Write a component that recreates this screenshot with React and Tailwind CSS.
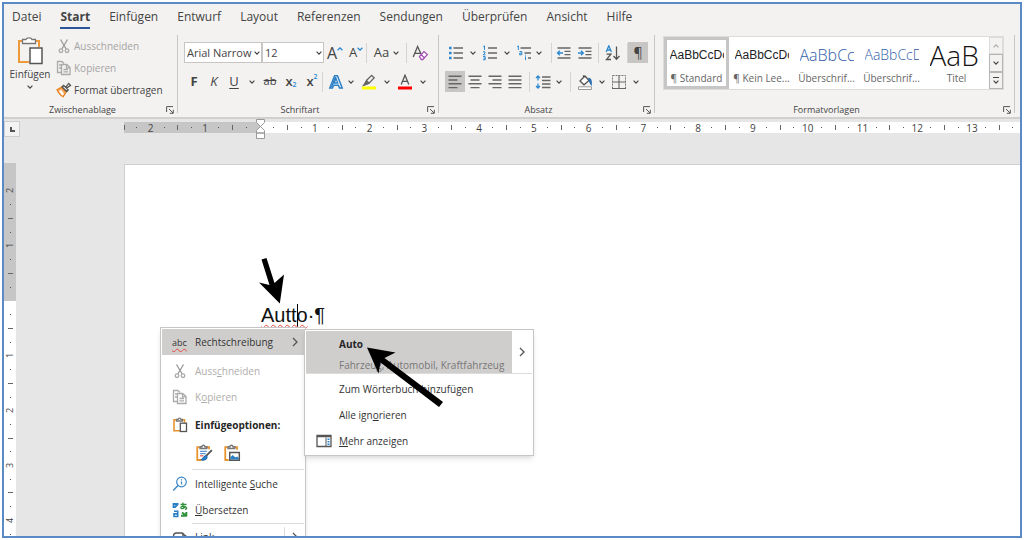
import clsx from "clsx";

const tabs = [
	"Datei",
	"Start",
	"Einfügen",
	"Entwurf",
	"Layout",
	"Referenzen",
	"Sendungen",
	"Überprüfen",
	"Ansicht",
	"Hilfe",
];

const styleItems = [
	{ sample: "AaBbCcDc", name: "¶ Standard", look: "text-[12px] text-[#222] font-['Liberation_Sans_Narrow','Liberation_Sans',sans-serif]", active: true },
	{ sample: "AaBbCcDc", name: "¶ Kein Lee...", look: "text-[12px] text-[#222] font-['Liberation_Sans_Narrow','Liberation_Sans',sans-serif]" },
	{ sample: "AaBbCcD", name: "Überschrif...", look: "text-[16px] font-light text-[#2f5da8]" },
	{ sample: "AaBbCcD", name: "Überschrif...", look: "text-[14px] font-light text-[#2f5da8]" },
	{ sample: "AaB", name: "Titel", look: "text-[28px] font-light text-[#111]" },
];

const Chevron = ({ className }) => (
	<svg viewBox="0 0 6 4" className={clsx("w-[6px] h-[4px] shrink-0", className)} fill="none" stroke="#444" strokeWidth="1.2">
		<path d="M0.6 0.7 3 3.1 5.4 0.7" />
	</svg>
);

const ChevronRight = ({ className }) => (
	<svg viewBox="0 0 6 10" className={clsx("w-[6px] h-[10px] shrink-0", className)} fill="none" stroke="#555" strokeWidth="1.3">
		<path d="M1 1 5 5 1 9" />
	</svg>
);

const Icon = ({ children, className = "w-4 h-4", box = "0 0 16 16" }) => (
	<svg viewBox={box} className={clsx("shrink-0", className)} fill="none" stroke="#555" strokeWidth="1.3" aria-hidden="true">
		{children}
	</svg>
);

const ScissorsIcon = () => (
	<Icon>
		<path d="M4.5 1.5 10.2 11M11.5 1.5 5.8 11" stroke="#999" />
		<circle cx="5" cy="12.7" r="1.8" stroke="#aaa" />
		<circle cx="11" cy="12.7" r="1.8" stroke="#aaa" />
	</Icon>
);

const CopyIcon = () => (
	<Icon>
		<path d="M5 12.5H1.5v-11H6l2 2" stroke="#aaa" />
		<path d="M5.5 4.5h5.2L14 7.6v6.9H5.5zM10.5 4.5v3.3H14M7.5 9.5h4.5M7.5 11.8h4.5M3 5h2M3 8h2" stroke="#aaa" />
	</Icon>
);

const PainterIcon = () => (
	<Icon>
		<path d="M1 7.8 5.3 5.4 10 10.2 7.2 14.6C5 13.8 2.6 11 1 7.8z" fill="#f7b26d" stroke="#e8811c" />
		<path d="M3 9.3 5 8l3 4-1.6 1.7z" fill="#fff" stroke="none" />
		<path d="M6 4.8 10.7 9.5 12.2 8 10.5 6.2 14.5 3.3 12.7 1.4 9.6 5.3 7.6 3.4z" fill="#fff" stroke="#555" />
	</Icon>
);

const Clipboard = () => (
	<Icon>
		<path d="M4 2.7H2v11h6M10.5 2.7h2v3" stroke="#e8942f" strokeWidth="1.6" />
		<path d="M4.5 4V2.4h1.6C6.4.6 8.6.6 8.9 2.4h1.6V4z" fill="#fff" stroke="#777" />
		<rect x="8.3" y="6.2" width="6.2" height="8.3" fill="#fff" stroke="#555" />
	</Icon>
);

const LauncherIcon = () => (
	<Icon box="0 0 8 8" className="w-2 h-2">
		<path d="M.6 6V.6H7M3 3l4 4M7.3 3.8v3.5H3.8" strokeWidth="1" />
	</Icon>
);

const BulletsIcon = () => (
	<Icon>
		<path d="M5.5 3H15M5.5 8H15M5.5 13H15" stroke="#666" />
		<path d="M1 1.7h2.6v2.6H1zM1 6.7h2.6v2.6H1zM1 11.7h2.6v2.6H1z" fill="#2b88d0" stroke="none" />
	</Icon>
);

const NumbersIcon = () => (
	<Icon>
		<path d="M6 3h9M6 8h9M6 13h9" stroke="#666" />
		<path d="M1.3 1.6 2.5.9v4M1 6.8h2v1.3L1.2 9.8h2.2M1 11.6h2.2v3.2H1M1.5 13.2h1.5" stroke="#2b88d0" strokeWidth="1" />
	</Icon>
);

const MultiLevelIcon = () => (
	<Icon>
		<path d="M4.5 3H15M8.5 8H15M12 13h3" stroke="#666" />
		<path d="M1.2 1.6 2.4.9v4M3.5 6.5h2.3v3.3H3.6V8.2h2M9.5 11.5v3.5M9.5 9.7v.8" stroke="#2b88d0" strokeWidth="1" />
	</Icon>
);

const IndentIcon = ({ inward }) => (
	<Icon>
		<path d="M1.5 3h13M8.5 6.3h6M8.5 9.6h6M1.5 13h13" stroke="#666" />
		{inward ? (
			<path d="M1 8h5M4 5.8 6.3 8 4 10.2" stroke="#2b88d0" />
		) : (
			<path d="M7 8H1.6M3.8 5.8 1.5 8l2.3 2.2" stroke="#2b88d0" />
		)}
	</Icon>
);

const alignPaths = {
	left: "M1.5 2.2h13M1.5 6h9M1.5 9.8h13M1.5 13.6h9",
	center: "M1.5 2.2h13M3.5 6h9M1.5 9.8h13M3.5 13.6h9",
	right: "M1.5 2.2h13M5.5 6h9M1.5 9.8h13M5.5 13.6h9",
	justify: "M1.5 2.2h13M1.5 6h13M1.5 9.8h13M1.5 13.6h13",
};

const AlignIcon = ({ kind }) => (
	<Icon>
		<path d={alignPaths[kind]} stroke="#666" strokeWidth="1.4" />
	</Icon>
);

const ToolButton = ({ label, width = "w-5", className, children }) => (
	<button
		type="button"
		aria-label={label}
		className={clsx("h-[21px] shrink-0 flex items-center justify-center", width, className)}>
		{children}
	</button>
);

const Drop = ({ label, width = "w-3" }) => (
	<ToolButton label={label} width={width}>
		<Chevron />
	</ToolButton>
);

const Divider = ({ className }) => (
	<div className={clsx("w-px h-5 bg-[#d5d4d3] shrink-0", className)} />
);

const Group = ({ title, className, children }) => (
	<>
		<section className={clsx("flex flex-col", className)}>
			<div className="h-[67px]">{children}</div>
			<div className="h-[15px] flex items-center">
				<span className="flex-1 text-center text-[9px] leading-none">{title}</span>
				<button type="button" aria-label={`${title} öffnen`} className="w-4 pr-[3px] flex items-center justify-end">
					<LauncherIcon />
				</button>
			</div>
		</section>
		<div className="w-px h-[78px] bg-[#c8c6c4] shrink-0" />
	</>
);

const FontSelect = ({ label, value, width }) => (
	<div className={clsx("relative flex items-center", width)}>
		<select
			aria-label={label}
			defaultValue={value}
			className="appearance-none w-full h-[21px] pl-[2px] bg-white border border-[#c8c6c4] text-[11px] leading-none outline-none">
			<option>{value}</option>
		</select>
		<Chevron className="absolute right-[2px] pointer-events-none" />
	</div>
);

const ClipboardGroup = () => (
	<Group title="Zwischenablage" className="w-[173px]">
		<div className="flex pl-[3px]">
			<button type="button" className="w-[46px] flex flex-col items-center pt-[2px]">
				<Icon box="0 0 26 28" className="w-[26px] h-7">
					<path d="M6 4H2v21h10M18 4h4v6" stroke="#ee9a3a" strokeWidth="2" />
					<path d="M5.5 6.5v-4H9C9.6.2 14.4.2 15 2.5h3.5v4z" fill="#fff" stroke="#777" />
					<rect x="13" y="11" width="12" height="15.5" fill="#fff" stroke="#555" strokeWidth="1.5" />
				</Icon>
				<span className="text-[10px] leading-[18px]">Einfügen</span>
				<Chevron className="mt-[2px]" />
			</button>
			<div className="flex flex-col pl-[3px] text-[10px]">
				<button type="button" disabled className="h-[22px] flex items-center gap-[2px] text-[#a6a4a2]">
					<ScissorsIcon />
					Ausschneiden
				</button>
				<button type="button" disabled className="h-[22px] flex items-center gap-[2px] text-[#a6a4a2]">
					<CopyIcon />
					Kopieren
				</button>
				<button type="button" className="h-[22px] flex items-center gap-[2px]">
					<PainterIcon />
					Format übertragen
				</button>
			</div>
		</div>
	</Group>
);

const FontGroup = () => (
	<Group title="Schriftart" className="w-[260px]">
		<div className="flex flex-col gap-2 pt-[7px] pl-[6px]">
			<div className="h-[21px] flex items-center">
				<FontSelect label="Schriftart" value="Arial Narrow" width="w-[78px]" />
				<FontSelect label="Schriftgrad" value="12" width="w-[62px]" />
				<ToolButton label="Schriftgrad vergrößern" width="w-[22px]">
					<span className="text-[16px] leading-none">A</span>
					<Icon box="0 0 6 4" className="w-[6px] h-[4px] mb-2">
						<path d="M.6 3.3 3 .9l2.4 2.4" stroke="#2b88d0" />
					</Icon>
				</ToolButton>
				<ToolButton label="Schriftgrad verkleinern" width="w-[20px]">
					<span className="text-[13px] leading-none">A</span>
					<Icon box="0 0 6 4" className="w-[6px] h-[4px] mb-2">
						<path d="M.6 .7 3 3.1 5.4 .7" stroke="#2b88d0" />
					</Icon>
				</ToolButton>
				<Divider />
				<ToolButton label="Groß-/Kleinschreibung" width="w-[39px]" className="gap-1">
					<span className="text-[13px] leading-none">Aa</span>
					<Chevron />
				</ToolButton>
				<Divider />
				<ToolButton label="Formatierung löschen" width="w-[26px]">
					<Icon>
						<path d="M1.2 12 5.6 1.5 9 9M2.8 8.3h5.4" stroke="#555" />
						<path d="M7.5 11.5 12 6.6l3.3 3-4.5 4.9h-1.5zM9.2 9.8l3.2 3" fill="#fff" stroke="#a54fb5" />
					</Icon>
				</ToolButton>
			</div>
			<div className="h-[21px] flex items-center text-[13px]">
				<ToolButton label="Fett" className="font-bold">F</ToolButton>
				<ToolButton label="Kursiv" className="italic">K</ToolButton>
				<ToolButton label="Unterstrichen" className="underline underline-offset-2">U</ToolButton>
				<Drop label="Unterstreichungsart" width="w-4" />
				<ToolButton label="Durchgestrichen" className="line-through text-[11px]">ab</ToolButton>
				<ToolButton label="Tiefgestellt" width="w-[22px]" className="font-semibold">
					x<span className="text-[7px] text-[#2b88d0] mt-2">2</span>
				</ToolButton>
				<ToolButton label="Hochgestellt" width="w-[20px]" className="font-semibold">
					x<span className="text-[7px] text-[#2b88d0] mb-2">2</span>
				</ToolButton>
				<Divider />
				<ToolButton label="Texteffekte" width="w-[25px]">
					<Icon>
						<path d="M1.8 14 6.6 1.8h2.8L14.2 14h-2.7l-1-2.8h-5L4.5 14z" fill="#fff" stroke="#2b7fc4" strokeWidth="1.5" />
						<path d="M6.2 9 8 4.3 9.8 9zM3.5 13 7.5 3" stroke="#2b7fc4" strokeWidth="1.3" />
					</Icon>
				</ToolButton>
				<Drop label="Texteffekte wählen" width="w-[6px]" />
				<ToolButton label="Texthervorhebung" width="w-[30px]">
					<Icon>
						<path d="M1 12.5h14v3H1z" fill="#ffff00" stroke="none" />
						<path d="M3 11 5.5 6.5 10.6 1.4l2.6 2.4-5.1 5.3zM5.5 6.5l2.6 2.6" stroke="#666" />
						<path d="M3 11 5.5 8l1.5 1.5z" fill="#666" stroke="#666" />
					</Icon>
				</ToolButton>
				<Drop label="Hervorhebungsfarbe" width="w-[6px]" />
				<ToolButton label="Schriftfarbe" width="w-[30px]">
					<Icon>
						<path d="M1 12.5h14v3H1z" fill="#ff0000" stroke="none" />
						<path d="M4.2 10.5 8 1.2l3.8 9.3M5.5 7.4h5" />
					</Icon>
				</ToolButton>
				<Drop label="Schriftfarbe wählen" width="w-[6px]" />
			</div>
		</div>
	</Group>
);

const ParagraphGroup = () => (
	<Group title="Absatz" className="w-[215px]">
		<div className="flex flex-col gap-2 pt-[7px] pl-[6px]">
			<div className="h-[21px] flex items-center">
				<ToolButton label="Aufzählungszeichen" width="w-[22px]"><BulletsIcon /></ToolButton>
				<Drop label="Aufzählungszeichen wählen" />
				<ToolButton label="Nummerierung" width="w-[22px]"><NumbersIcon /></ToolButton>
				<Drop label="Nummerierung wählen" />
				<ToolButton label="Liste mit mehreren Ebenen" width="w-[22px]"><MultiLevelIcon /></ToolButton>
				<Drop label="Listenebene wählen" width="w-2" />
				<Divider className="ml-2" />
				<ToolButton label="Einzug verkleinern" width="w-6"><IndentIcon /></ToolButton>
				<ToolButton label="Einzug vergrößern" width="w-[18px]"><IndentIcon inward /></ToolButton>
				<Divider className="ml-1" />
				<ToolButton label="Sortieren" width="w-[28px]">
					<Icon>
						<path d="M1.2 7 3.8.8 6.4 7M2.1 5h3.4" stroke="#2b88d0" />
						<path d="M1.5 9.2h4.4l-4.4 5.3H6M11.5 1.5v12.5M8.5 11l3 3.2 3-3.2" />
					</Icon>
				</ToolButton>
				<Divider />
				<ToolButton label="Alle anzeigen" className="bg-[#c8c6c4] text-[14px]">¶</ToolButton>
			</div>
			<div className="h-[21px] flex items-center">
				<ToolButton label="Linksbündig" className="bg-[#c8c6c4]"><AlignIcon kind="left" /></ToolButton>
				<ToolButton label="Zentriert"><AlignIcon kind="center" /></ToolButton>
				<ToolButton label="Rechtsbündig"><AlignIcon kind="right" /></ToolButton>
				<ToolButton label="Blocksatz"><AlignIcon kind="justify" /></ToolButton>
				<Divider className="ml-1" />
				<ToolButton label="Zeilenabstand" width="w-[26px]">
					<Icon>
						<path d="M7 3h8.5M7 6.5h8.5M7 10h8.5M7 13.5h8.5" stroke="#666" />
						<path d="M3 2v4.5M1 4 3 2l2 2M3 14V9.5M1 12l2 2 2-2" stroke="#2b88d0" />
					</Icon>
				</ToolButton>
				<Drop label="Zeilenabstand wählen" width="w-[6px]" />
				<Divider className="ml-2" />
				<ToolButton label="Schattierung" width="w-[28px]">
					<Icon>
						<path d="M1.5 12.8h13v2.7h-13z" fill="#fff" stroke="#999" strokeWidth="1" />
						<path d="M3 7 8 2l4 4.5-5 4.3zM6.5 3.5V1.2" fill="#fff" />
						<path d="M12 4.5c2 .5 2.5 2.5 2.2 6-1-1-1.8-2.6-2.2-6z" fill="#2b88d0" stroke="#2b6fb0" />
					</Icon>
				</ToolButton>
				<Drop label="Schattierung wählen" width="w-[6px]" />
				<ToolButton label="Rahmen" width="w-[28px]">
					<Icon>
						<path d="M1.5 1.5h13v13h-13z" stroke="#777" strokeDasharray="2 1" strokeWidth="1" />
						<path d="M8 1.5v13M1.5 8h13M1 14.5h14" stroke="#666" strokeWidth="1.1" />
					</Icon>
				</ToolButton>
				<Drop label="Rahmen wählen" width="w-[6px]" />
			</div>
		</div>
	</Group>
);

const StylesGroup = () => (
	<Group title="Formatvorlagen" className="flex-1 min-w-0">
		<div className="pt-px pl-2 pr-[10px]">
			<div className="h-[54px] flex bg-white border border-[#dddcdb]">
				{styleItems.map((item, i) => (
					<button
						key={i}
						type="button"
						className={clsx(
							"flex-1 min-w-0 overflow-hidden flex flex-col items-center border-[3px]",
							item.active ? "border-[#c6c6c6]" : "border-transparent"
						)}>
						<span className={clsx("h-[30px] w-[54px] overflow-hidden whitespace-nowrap text-left leading-[30px]", item.look)}>
							{item.sample}
						</span>
						<span className="text-[10px] leading-4 text-[#666] whitespace-nowrap">{item.name}</span>
					</button>
				))}
				<div className="w-[14px] flex flex-col">
					<button type="button" aria-label="Nach oben" className="flex-1 flex items-center justify-center bg-[#f3f2f1] border border-[#dddcdb]">
						<Chevron className="rotate-180 opacity-40" />
					</button>
					<button type="button" aria-label="Nach unten" className="flex-1 flex items-center justify-center bg-[#f3f2f1] border border-[#b5b5b5]">
						<Chevron />
					</button>
					<button type="button" aria-label="Alle Vorlagen" className="flex-1 flex flex-col items-center justify-center gap-[2px] bg-[#f3f2f1] border border-[#b5b5b5]">
						<div className="w-[6px] h-px bg-[#444]" />
						<Chevron />
					</button>
				</div>
			</div>
		</div>
	</Group>
);

// Four ticks per centimetre: dot, line, dot, number
const tickLabel = (i) => {
	const n = Math.abs(i);
	if (n % 4 === 0) return String(n / 4);
	return n % 2 === 0 ? "|" : "·";
};

const Tick = ({ i, vertical }) => {
	const mark = tickLabel(i);
	return (
		<div className={clsx("flex-1 flex items-center justify-center", vertical ? "min-h-0" : "min-w-0")}>
			{mark === "|" ? (
				<div className={clsx("bg-[#666]", vertical ? "w-[5px] h-px" : "w-px h-[5px]")} />
			) : mark === "·" ? (
				<div className="w-px h-px bg-[#555]" />
			) : (
				<span className={clsx("leading-none text-[#444]", vertical ? "text-[9px] -rotate-90" : "text-[10px]")}>{mark}</span>
			)}
		</div>
	);
};

const range = (from, to) => Array.from({ length: to - from + 1 }, (_, k) => from + k);

const HorizontalRuler = () => (
	<div className="h-11 flex items-start shrink-0">
		<div className="w-4 h-4 mt-[2px] bg-[#f3f3f3] border border-[#cfcfcf] flex items-center justify-center">
			<div className="w-[5px] h-[5px] border-l-2 border-b-2 border-[#555]" />
		</div>
		<div className="relative flex flex-1 h-[11px] mt-[3px] ml-[104px]">
			<div className="w-[136px] flex bg-[#c6c6c6] pr-[7px]">
				<div className="w-[6px] flex items-center">
					<div className="w-px h-[5px] bg-[#666]" />
				</div>
				{range(-9, -1).map((i) => <Tick key={i} i={i} />)}
			</div>
			<div className="flex-1 flex bg-white pl-[7px]">
				{range(1, 55).map((i) => <Tick key={i} i={i} />)}
			</div>
			<svg viewBox="0 0 9 20" className="absolute left-[132px] -top-[3px] w-[9px] h-5" fill="#fff" stroke="#999" strokeWidth="1">
				<path d="M.5.5h8v3l-4 4-4-4zM.5 14v-2.5l4-4 4 4V14zM.5 14h8v5.5h-8z" />
			</svg>
		</div>
	</div>
);

const VerticalRuler = () => (
	<div className="w-3 shrink-0 flex flex-col overflow-hidden">
		<div className="h-[138px] shrink-0 flex flex-col bg-[#c6c6c6] pt-[21px] pb-[7px]">
			{range(-8, -1).map((i) => <Tick key={i} i={i} vertical />)}
		</div>
		<div className="flex-1 flex flex-col bg-white pt-[7px] -mb-[5px]">
			{range(1, 17).map((i) => <Tick key={i} i={i} vertical />)}
		</div>
	</div>
);

const wave = "underline decoration-wavy decoration-[#e8483f] decoration-1";

const MenuItem = ({ icon, children, className }) => (
	<button type="button" role="menuitem" className={clsx("w-full h-[26px] flex items-center text-left", className)}>
		<span className="w-[33px] pl-[10px] flex items-center shrink-0">{icon}</span>
		{children}
	</button>
);

const MenuRule = ({ className }) => <div className={clsx("ml-[30px] h-px bg-[#dcdcdc]", className)} />;

const ContextMenu = () => (
	<div role="menu" className="absolute left-[35px] top-[162px] w-[146px] pt-px px-px bg-white border border-[#c6c6c6] shadow-md text-[10px] text-[#333]">
		<MenuItem
			className="bg-[#d0cecd] mb-[3px]"
			icon={<span className={clsx("text-[9px] leading-none underline-offset-2", wave)}>abc</span>}>
			<span className="flex-1">Rechtschreibung</span>
			<ChevronRight className="mr-[6px]" />
		</MenuItem>
		<MenuItem className="text-[#b0aeac]" icon={<ScissorsIcon />}>
			<span>Auss<u>c</u>hneiden</span>
		</MenuItem>
		<MenuItem className="text-[#b0aeac]" icon={<CopyIcon />}>
			<span>K<u>o</u>pieren</span>
		</MenuItem>
		<MenuItem icon={<Clipboard />} className="mt-[2px] font-bold text-[#262626]">
			Einfügeoptionen:
		</MenuItem>
		<div className="flex gap-[10px] pl-[33px] pt-[6px] pb-[7px]">
			<button type="button" role="menuitem" aria-label="Formatierung zusammenführen">
				<Icon className="w-[18px] h-[18px]">
					<path d="M4 2.7H2v11.5h4M10.5 2.7h2v2" stroke="#e8942f" strokeWidth="1.6" />
					<path d="M4.5 4V2.4h1.6C6.4.6 8.6.6 8.9 2.4h1.6V4z" fill="#fff" stroke="#777" />
					<path d="M4.5 6.5h6M4.5 8.5h5" stroke="#5b9bd5" strokeWidth="1" />
					<path d="M4.5 10.5h3" stroke="#e05050" strokeWidth="1" />
					<path d="M15 5.5 9.5 11" stroke="#555" strokeWidth="1.7" />
					<path d="M9.8 10.5c-2 0-2.3 2.2-4 3.4 2 1 4.5 0 5-2.2z" fill="#2b88d0" stroke="#1f6cb0" strokeWidth="1" />
				</Icon>
			</button>
			<button type="button" role="menuitem" aria-label="Grafik">
				<Icon className="w-[18px] h-[18px]">
					<path d="M4 2.7H2v11.5h3M10.5 2.7h2v2.5" stroke="#e8942f" strokeWidth="1.6" />
					<path d="M4.5 4V2.4h1.6C6.4.6 8.6.6 8.9 2.4h1.6V4z" fill="#fff" stroke="#777" />
					<path d="M6 7.5h8.5v7H6z" fill="#fff" />
					<path d="M6.6 13.8v-2l2-2 2.4 2.2 1.5-1 1.5 1.5v1.3z" fill="#2b7fc4" stroke="none" />
				</Icon>
			</button>
		</div>
		<MenuRule className="mb-px" />
		<MenuItem
			icon={
				<Icon>
					<circle cx="9.5" cy="6" r="4.8" fill="#fff" stroke="#3a87c8" strokeWidth="1.2" />
					<path d="M6 9.5 1.2 14.5" stroke="#3a87c8" strokeWidth="1.4" />
					<path d="M9.5 5.5v3M9.5 3.3v1.1" stroke="#3a87c8" strokeWidth="1.2" />
				</Icon>
			}>
			<span>Intelligente <u>S</u>uche</span>
		</MenuItem>
		<MenuItem
			icon={
				<Icon>
					<path d="M1.5 1v5M1.5 2h5M2.5 5.5 6 2" stroke="#2b7fc4" strokeWidth="1.8" />
					<path d="M2 9.3h3.7v5.2H2v-2.6h3.5" stroke="#2b7fc4" strokeWidth="1.6" />
					<path d="M8.5 2.3h6M11 .5c-.5 3 0 4.5 1 6M13.5 3.8c-1 3.2-4.7 3.6-4.7 1.7 0-1.5 4-2 5.7 0 .5 1-.5 1.8-1.5 2" stroke="#2f8f3a" strokeWidth="1.3" />
					<path d="M14.3 10v4.5M9 13.8h5.5M10 10.5l4 3" stroke="#2f8f3a" strokeWidth="2" />
				</Icon>
			}>
			<span><u>Ü</u>bersetzen</span>
		</MenuItem>
		<MenuRule />
		<MenuItem
			icon={
				<Icon>
					<path d="M6 10H4.5a3 3 0 0 1 0-6h5a3 3 0 0 1 3 3M10 6h1.5a3 3 0 0 1 0 6h-5a3 3 0 0 1-3-3" />
				</Icon>
			}>
			<span className="flex-1">L<u>i</u>nk</span>
			<div className="w-px h-5 bg-[#dcdcdc] mr-[7px]" />
			<ChevronRight className="mr-[6px]" />
		</MenuItem>
	</div>
);

const SpellingMenu = () => (
	<div role="menu" className="absolute left-[179px] top-[164px] w-[230px] p-px bg-white border border-[#c6c6c6] shadow-md text-[10px] text-[#333]">
		<div className="h-[43px] mb-[2px] flex border-b border-[#dcdcdc]">
			<button type="button" role="menuitem" className="w-[206px] pl-[33px] flex flex-col bg-[#d0cecd] text-left whitespace-nowrap">
				<span className="font-bold leading-[26px] text-[#262626]">Auto</span>
				<span className="leading-4 text-[#777]">Fahrzeug, Automobil, Kraftfahrzeug</span>
			</button>
			<button type="button" aria-label="Weitere Optionen" className="flex-1 flex items-center justify-center">
				<ChevronRight />
			</button>
		</div>
		<MenuItem>Zum Wörterbuch hinzufügen</MenuItem>
		<MenuItem>
			<span>Alle ign<u>o</u>rieren</span>
		</MenuItem>
		<MenuItem
			icon={
				<Icon>
					<path d="M1 2.5h14v11H1zM1 3.5h14" stroke="#555" />
					<path d="M10 4.5v8.5" stroke="#555" strokeWidth="1" />
					<path d="M12.5 5.5v7" stroke="#2b88d0" strokeWidth="2" strokeDasharray="1.5 1" />
				</Icon>
			}>
			<span><u>M</u>ehr anzeigen</span>
		</MenuItem>
	</div>
);

const Arrow = ({ d, className, box }) => (
	<svg viewBox={box} className={clsx("absolute pointer-events-none", className)} fill="#000">
		<path d={d} />
	</svg>
);

const Page = () => (
	<main className="relative flex-1 ml-[108px] mt-px pl-[136px] pt-[136px] bg-white border-l border-t border-[#cfcfcf]">
		<p className="text-[20px] leading-7 text-[#111] font-['Liberation_Sans_Narrow','Liberation_Sans',sans-serif]">
			<span className={clsx("underline-offset-2", wave)}>Autt</span>
			<span className="inline-block align-middle w-px h-[26px] -mr-px bg-black" />
			<span className={clsx("underline-offset-2", wave)}>o</span>·¶
		</p>
		<ContextMenu />
		<SpellingMenu />
		<Arrow
			box="0 0 26 48"
			className="left-[134px] top-[92px] w-[26px] h-12"
			d="M2.5 2.5 7.5 1 15.5 26 25 17.5 20.8 46.5 0 25.5 10.5 28z"
		/>
		<Arrow
			box="0 0 78 62"
			className="left-[241px] top-[181px] w-[78px] h-[62px]"
			d="M1 1.5 29.5 6.5 18.5 12 77 56 73 61 14.5 16.5 12.5 27.5z"
		/>
	</main>
);

const App = () => (
	<div className="h-screen p-[2px] bg-white overflow-hidden font-['Open_Sans','Noto_Sans',sans-serif] text-[#444]">
		<div className="h-full flex flex-col border-2 border-[#5b8bc5] overflow-hidden">
			<header className="bg-[#f3f2f1] border-b-2 border-[#d2d0ce]">
				<nav className="h-[25px] flex gap-[19px] pl-2 text-[12px]">
					{tabs.map((tab) => (
						<a
							key={tab}
							href="#"
							className={clsx(
								"flex items-center border-y-2 border-t-transparent",
								tab === "Start" ? "font-bold border-b-[#2b579a]" : "border-b-transparent"
							)}>
							{tab}
						</a>
					))}
				</nav>
				<div className="flex pt-[6px] pr-[5px]">
					<ClipboardGroup />
					<FontGroup />
					<ParagraphGroup />
					<StylesGroup />
				</div>
			</header>
			<div className="flex-1 min-h-0 flex flex-col bg-[#e6e6e6]">
				<HorizontalRuler />
				<div className="flex-1 min-h-0 flex">
					<VerticalRuler />
					<Page />
				</div>
			</div>
		</div>
	</div>
);

export default App;
